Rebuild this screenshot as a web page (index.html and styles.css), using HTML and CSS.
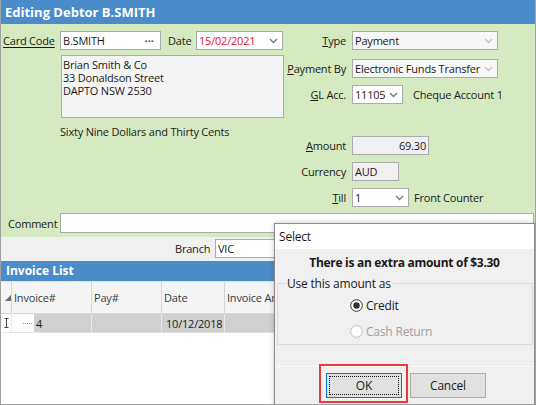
FILE: index.html
```html
<!DOCTYPE html>
<html>
<head>
<meta charset="utf-8">
<link rel="stylesheet" href="styles.css">
</head>
<body>
<div class="win">
  <div class="titlebar">Editing Debtor B.SMITH</div>
  <div class="form">
    <div class="cols">
      <div class="left">
        <div class="r1">
          <span class="lbl-card">Card Code</span>
          <div class="inp code"><span>B.SMITH</span><span class="dots">···</span></div>
          <span class="lbl-date">Date</span>
          <div class="inp combo date"><span class="red">15/02/2021</span><svg class="chev" width="9" height="6" viewBox="0 0 9 6"><polyline points="1,1 4.5,4.5 8,1" fill="none" stroke="#7a7a7a" stroke-width="1.4"/></svg></div>
        </div>
        <div class="addr">
          <div class="aline">Brian Smith &amp; Co</div>
          <div class="aline">33 Donaldson Street</div>
          <div class="aline">DAPTO NSW 2530</div>
        </div>
        <div class="words">Sixty Nine Dollars and Thirty Cents</div>
      </div>
      <div class="right">
        <div class="frow"><span class="flbl"><u>T</u>ype</span><div class="inp combo dis w146"><span>Payment</span><svg class="chev" width="9" height="6" viewBox="0 0 9 6"><polyline points="1,1 4.5,4.5 8,1" fill="none" stroke="#c4c4c4" stroke-width="1.4"/></svg></div></div>
        <div class="frow m9"><span class="flbl"><u>P</u>ayment By</span><div class="inp combo dis w146"><span>Electronic Funds Transfer</span><svg class="chev" width="9" height="6" viewBox="0 0 9 6"><polyline points="1,1 4.5,4.5 8,1" fill="none" stroke="#c4c4c4" stroke-width="1.4"/></svg></div></div>
        <div class="frow m7"><span class="flbl"><u>G</u>L Acc.</span><div class="inp combo w51"><span>11105</span><svg class="chev" width="9" height="6" viewBox="0 0 9 6"><polyline points="1,1 4.5,4.5 8,1" fill="none" stroke="#7a7a7a" stroke-width="1.4"/></svg></div><span class="after">Cheque Account 1</span></div>
        <div class="frow m32"><span class="flbl"><u>A</u>mount</span><div class="inp ro w77 num">69.30</div></div>
        <div class="frow m7"><span class="flbl">Currency</span><div class="inp ro w47">AUD</div></div>
        <div class="frow m7"><span class="flbl"><u>T</u>ill</span><div class="inp combo w57"><span>1</span><svg class="chev" width="9" height="6" viewBox="0 0 9 6"><polyline points="1,1 4.5,4.5 8,1" fill="none" stroke="#7a7a7a" stroke-width="1.4"/></svg></div><span class="after">Front Counter</span></div>
      </div>
    </div>
    <div class="comment-row"><span class="clbl">Comment</span><div class="inp comment"></div></div>
  </div>
  <div class="branch-bar"><span class="blbl">Branch</span><div class="inp branch">VIC</div></div>
  <div class="section-title">Invoice List</div>
  <div class="grid">
    <div class="grid-head">
      <div class="gh ind"><svg width="6" height="6" viewBox="0 0 6 6"><polygon points="6,0 6,6 0,6" fill="#6d6d6d"/></svg></div>
      <div class="gh">Invoice#</div>
      <div class="gh">Pay#</div>
      <div class="gh">Date</div>
      <div class="gh">Invoice Amount</div>
    </div>
    <div class="grid-row">
      <div class="gc ind"><svg width="5" height="10" viewBox="0 0 5 10"><path d="M0.5 0.5H4.5M2.5 0.5V9.5M0.5 9.5H4.5" fill="none" stroke="#444" stroke-width="1"/></svg></div>
      <div class="gc first"><span class="tree"><span class="dotline"></span></span><span>4</span></div>
      <div class="gc"></div>
      <div class="gc">10/12/2018</div>
      <div class="gc num">66.30</div>
    </div>
  </div>

  <div class="dialog">
    <div class="dlg-title">Select</div>
    <div class="dlg-head">There is an extra amount of $3.30</div>
    <fieldset class="grp">
      <legend>Use this amount as</legend>
      <div class="radio r-credit"><svg width="13" height="13" viewBox="0 0 13 13"><circle cx="6.5" cy="6.5" r="5.8" fill="#fff" stroke="#333" stroke-width="1"/><circle cx="6.5" cy="6.5" r="3.2" fill="#333"/></svg><span>Credit</span></div>
      <div class="radio r-cash"><svg width="13" height="13" viewBox="0 0 13 13"><circle cx="6.5" cy="6.5" r="5.8" fill="#fff" stroke="#bfbfbf" stroke-width="1"/></svg><span>Cash Return</span></div>
    </fieldset>
    <div class="dlg-buttons">
      <div class="btn ok"><span class="focus">OK</span></div>
      <div class="btn">Cancel</div>
    </div>
  </div>
  <div class="highlight"></div>
</div>
</body>
</html>
```
FILE: styles.css
```css
* { box-sizing: border-box; }
body { margin: 0; font-family: "Open Sans", "Noto Sans", sans-serif; font-size: 11px; color: #1a1a1a; letter-spacing: -0.2px; }
.win { position: relative; width: 536px; height: 405px; border: 1px solid #a0a0a0; border-top: 0; overflow: hidden; background: #fff; }
.titlebar { height: 24px; background: #4a8bca; color: #fff; font-weight: bold; font-size: 13px; line-height: 24px; padding-left: 4px; letter-spacing: 0; }
.form { background: #d5eac1; padding: 7px 0 4px 0; }
.cols { display: flex; align-items: flex-start; }
.left { width: 283px; padding-left: 2px; }
.r1 { display: flex; align-items: center; height: 19px; }
.lbl-card { width: 57px; text-decoration: underline; text-underline-offset: 2px; }
.inp { height: 19px; border: 1px solid #ababab; background: #fff; display: flex; align-items: center; padding: 0 2px; white-space: nowrap; overflow: hidden; }
.code { width: 101px; justify-content: space-between; }
.dots { font-weight: bold; letter-spacing: 0; color: #444; padding-right: 4px; }
.lbl-date { margin-left: 7px; width: 28px; }
.date { width: 87px; }
.combo { justify-content: space-between; }
.chev { flex: none; margin-right: 2px; }
.red { color: #f01414; }
.addr { margin: 5px 0 0 58px; width: 223px; height: 63px; border: 1px solid #ababab; background: #f4f4f4; padding: 2px 0 0 1px; }
.aline { height: 13px; line-height: 13px; white-space: nowrap; }
.words { margin: 7px 0 0 57px; line-height: 14px; }
.right { flex: 1; }
.frow { display: flex; align-items: center; height: 19px; }
.m7 { margin-top: 7px; }
.m9 { margin-top: 9px; }
.m32 { margin-top: 32px; }
.flbl { width: 62px; text-align: right; margin-right: 6px; white-space: nowrap; }
.w146 { width: 146px; }
.w51 { width: 51px; }
.w77 { width: 77px; }
.w47 { width: 47px; }
.w57 { width: 57px; }
.dis { background: #f7f7f7; }
.ro { background: #f0f0f0; }
.num { justify-content: flex-end; text-align: right; }
.after { margin-left: 10px; }
.w57 + .after { margin-left: 5px; }
.comment-row { display: flex; align-items: center; margin-top: 6px; height: 20px; }
.clbl { width: 59px; padding-left: 7px; }
.comment { flex: 1; height: 20px; margin-right: 1px; }
.branch-bar { height: 24px; background: #f0f0f0; display: flex; align-items: flex-start; padding: 2px 0 0 174px; }
.blbl { width: 34px; margin-right: 6px; line-height: 19px; }
.branch { width: 120px; }
.section-title { height: 20px; background: #4a8bca; color: #fff; font-weight: bold; font-size: 12px; line-height: 20px; padding-left: 5px; letter-spacing: 0; }
.grid { border-top: 1px solid #e4e4e4; }
.grid-head, .grid-row { display: grid; grid-template-columns: 11px 80px 70px 63px 90px; }
.grid-head { height: 32px; background: #f5f5f5; }
.gh { border-right: 1px solid #d6d6d6; border-bottom: 1px solid #d6d6d6; display: flex; align-items: center; padding-left: 2px; color: #3a3a3a; white-space: nowrap; overflow: hidden; }
.gh.ind { padding-left: 4px; }
.grid-row { height: 19px; border-bottom: 1px solid #e4e4e4; }
.gc { background: #d0d0d0; border-right: 1px solid #e9e9e9; display: flex; align-items: center; padding-left: 4px; color: #1a1a1a; white-space: nowrap; overflow: hidden; }
.gc.ind { background: #fff; padding-left: 3px; }
.gc.first { padding-left: 0; }
.tree { width: 22px; height: 100%; background: #fff; display: flex; align-items: center; justify-content: flex-end; padding-right: 2px; margin-right: 2px; }
.dotline { width: 9px; border-top: 1px dotted #9a9a9a; }
.gc.num { justify-content: flex-end; padding-right: 4px; }
.dialog { position: absolute; left: 273px; top: 223px; width: 261px; height: 190px; border: 1px solid #8c8c8c; background: #f0f0f0; box-shadow: 0 0 5px rgba(0,0,0,0.22); }
.dlg-title { height: 25px; background: #fff; line-height: 25px; padding-left: 4px; font-size: 12px; }
.dlg-head { text-align: center; font-weight: bold; font-size: 12px; margin-top: 7px; line-height: 14px; letter-spacing: -0.3px; }
.grp { margin: 5px 1px 0 2px; border: 1px solid #dcdcdc; padding: 0 0 0 72px; height: 70px; }
.grp legend { padding: 0 2px; margin-left: -65px; font-size: 12px; }
.radio { display: flex; align-items: center; height: 14px; font-size: 12px; }
.radio svg { margin-right: 3px; }
.r-credit { margin-top: 6px; }
.r-cash { margin-top: 12px; color: #a0a0a0; }
.dlg-buttons { margin-top: 21px; border-top: 1px solid #fbfbfb; display: flex; padding: 6px 0 0 51px; gap: 8px; }
.btn { width: 76px; height: 25px; border: 1px solid #adadad; background: #e1e1e1; display: flex; align-items: center; justify-content: center; font-size: 12px; }
.btn.ok { border-color: #0078d7; padding: 2px; }
.focus { width: 100%; height: 100%; border: 1px dotted #111; display: flex; align-items: center; justify-content: center; }
.highlight { position: absolute; left: 318px; top: 364px; width: 89px; height: 39px; border: 2px solid #e8393f; }
```
